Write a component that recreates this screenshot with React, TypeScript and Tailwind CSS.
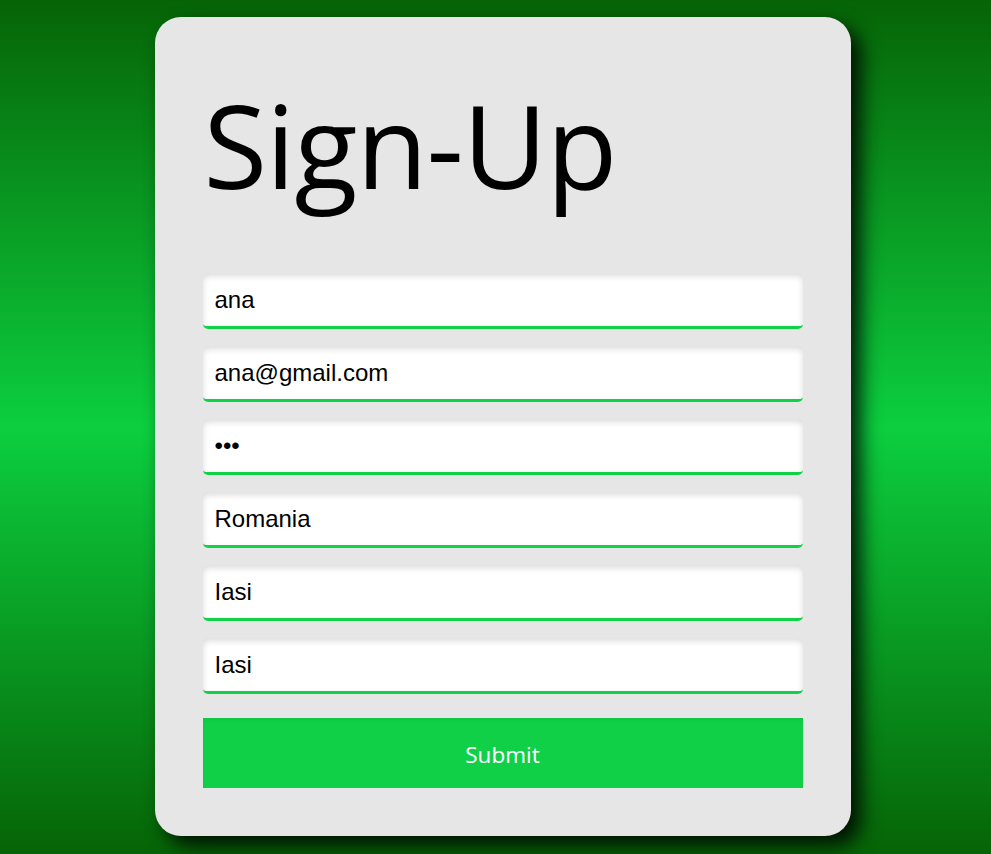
const FIELDS = [
  { type: "text", value: "ana" },
  { type: "email", value: "ana@gmail.com" },
  { type: "password", value: "abc" },
  { type: "text", value: "Romania" },
  { type: "text", value: "Iasi" },
  { type: "text", value: "Iasi" },
];

export default function App() {
  return (
    <div className="min-h-screen w-full flex justify-center pl-[14px] pt-[17px] pb-[18px] bg-[linear-gradient(180deg,#066406_0%,#0ccf3f_50%,#066406_100%)]">
      <form
        onSubmit={(e) => e.preventDefault()}
        className="w-[696px] h-[819px] rounded-[26px] bg-[#e6e6e6] px-[48px] pt-[52px] shadow-[10px_10px_20px_rgba(0,0,0,0.85)]"
      >
        {/* Title */}
        <h1 className="text-[116px] leading-[150px] text-black font-['Open_Sans',sans-serif] font-normal tracking-[-1px] ml-[1px]">
          Sign-Up
        </h1>

        {/* Fields */}
        <div className="mt-[54px] flex flex-col gap-[17px]">
          {FIELDS.map((f, i) => (
            <input
              key={i}
              type={f.type}
              defaultValue={f.value}
              className="h-[56px] w-full rounded-[5px] bg-white px-[12px] pt-[1px] border-b-[3px] border-[#11d146] text-[24px] text-black font-['Liberation_Sans',Arial,sans-serif] outline-none shadow-[inset_0_3px_6px_rgba(0,0,0,0.14)]"
            />
          ))}
        </div>

        <button
          type="submit"
          className="mt-[24px] h-[70px] w-full pt-[4px] bg-[#10d048] text-white text-[22.5px] font-['Open_Sans',sans-serif] shadow-[inset_0_2px_4px_rgba(0,0,0,0.06)]"
        >
          Submit
        </button>
      </form>
    </div>
  );
}
